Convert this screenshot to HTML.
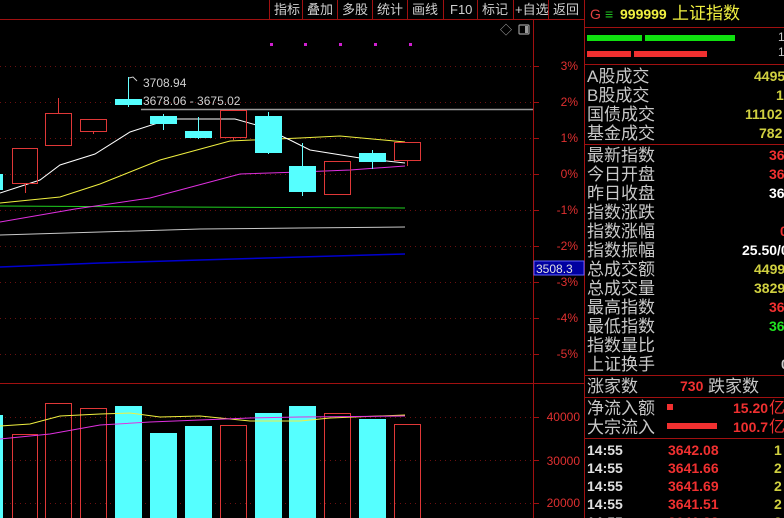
<!DOCTYPE html>
<html><head><meta charset="utf-8"><style>
html,body{margin:0;padding:0;background:#000;width:784px;height:518px;overflow:hidden}
svg{display:block}
text{font-family:"Liberation Sans","Noto Sans CJK SC",sans-serif}
.lb{fill:#c8c8c8;font-size:17px}
.ax{fill:#e03030;font-size:12px}
.tb{fill:#d0d0d0;font-size:13px}
.num{font-family:"Liberation Sans",sans-serif;font-weight:bold;font-size:14px}
</style></head><body>
<svg width="784" height="518" viewBox="0 0 784 518" xmlns="http://www.w3.org/2000/svg">
<rect width="784" height="518" fill="#000"/>
<!-- toolbar -->
<g stroke="#a01010" stroke-width="1">
<line x1="0" y1="19.5" x2="584" y2="19.5"/>
<line x1="269.5" y1="0" x2="269.5" y2="19"/><line x1="302.5" y1="0" x2="302.5" y2="19"/><line x1="337.5" y1="0" x2="337.5" y2="19"/><line x1="372.5" y1="0" x2="372.5" y2="19"/><line x1="407.5" y1="0" x2="407.5" y2="19"/><line x1="443.5" y1="0" x2="443.5" y2="19"/><line x1="477.5" y1="0" x2="477.5" y2="19"/><line x1="513.5" y1="0" x2="513.5" y2="19"/><line x1="548.5" y1="0" x2="548.5" y2="19"/>
<line x1="533.5" y1="19" x2="533.5" y2="518"/>
<line x1="584.5" y1="0" x2="584.5" y2="518"/>
<line x1="0" y1="383.5" x2="584" y2="383.5"/>
</g>
<g class="tb"><text x="274" y="14">指标</text><text x="307" y="14">叠加</text><text x="342" y="14">多股</text><text x="377" y="14">统计</text><text x="412" y="14">画线</text><text x="450" y="14">F10</text><text x="482" y="14">标记</text><text x="515" y="14">+自选</text><text x="553" y="14">返回</text></g>
<text x="500" y="34" fill="#aaa" font-size="12">◇</text>
<rect x="519" y="25" width="10" height="9" fill="none" stroke="#999" stroke-width="1.2" rx="1"/><rect x="525" y="26" width="3" height="7" fill="#999"/>
<!-- grid -->
<g stroke="#6a1010" stroke-dasharray="1 4" stroke-width="1">
<line x1="0" y1="66.5" x2="533" y2="66.5"/><line x1="0" y1="102.5" x2="533" y2="102.5"/><line x1="0" y1="138.5" x2="533" y2="138.5"/><line x1="0" y1="174.5" x2="533" y2="174.5"/><line x1="0" y1="210.5" x2="533" y2="210.5"/><line x1="0" y1="246.5" x2="533" y2="246.5"/><line x1="0" y1="282.5" x2="533" y2="282.5"/><line x1="0" y1="318.5" x2="533" y2="318.5"/><line x1="0" y1="354.5" x2="533" y2="354.5"/>
<line x1="0" y1="417.5" x2="533" y2="417.5"/><line x1="0" y1="460.5" x2="533" y2="460.5"/><line x1="0" y1="503.5" x2="533" y2="503.5"/>
</g>
<g stroke="#a01010"><line x1="533" y1="66.5" x2="539" y2="66.5"/><line x1="533" y1="102.5" x2="539" y2="102.5"/><line x1="533" y1="138.5" x2="539" y2="138.5"/><line x1="533" y1="174.5" x2="539" y2="174.5"/><line x1="533" y1="210.5" x2="539" y2="210.5"/><line x1="533" y1="246.5" x2="539" y2="246.5"/><line x1="533" y1="282.5" x2="539" y2="282.5"/><line x1="533" y1="318.5" x2="539" y2="318.5"/><line x1="533" y1="354.5" x2="539" y2="354.5"/><line x1="533" y1="417.5" x2="539" y2="417.5"/><line x1="533" y1="460.5" x2="539" y2="460.5"/><line x1="533" y1="503.5" x2="539" y2="503.5"/></g>
<g class="ax" text-anchor="end"><text x="578" y="70">3%</text><text x="578" y="106">2%</text><text x="578" y="142">1%</text><text x="578" y="178">0%</text><text x="578" y="214">-1%</text><text x="578" y="250">-2%</text><text x="578" y="286">-3%</text><text x="578" y="322">-4%</text><text x="578" y="358">-5%</text><text x="580" y="421">40000</text><text x="580" y="465">30000</text><text x="580" y="507">20000</text></g>
<rect x="534" y="261" width="50" height="14" fill="#0000a0" stroke="#6060ff" stroke-width="1"/>
<text x="536" y="273" fill="#e0e0e0" font-size="12">3508.3</text>
<!-- dots -->
<g fill="#d020d0"><rect x="270" y="43" width="3" height="3"/><rect x="304" y="43" width="3" height="3"/><rect x="339" y="43" width="3" height="3"/><rect x="374" y="43" width="3" height="3"/><rect x="409" y="43" width="3" height="3"/></g>
<!-- MA lines -->
<line x1="141" y1="109.5" x2="533" y2="109.5" stroke="#999" stroke-width="1.5"/>
<polyline fill="none" stroke="#0000d0" stroke-width="1.5" points="0,267 100,263 200,260 300,257 405,254"/>
<polyline fill="none" stroke="#c8c8c8" points="0,235 100,232 200,229 300,228 405,227"/>
<polyline fill="none" stroke="#20d020" points="0,206 180,207 405,208"/>
<polyline fill="none" stroke="#e030e0" points="0,222 75,209 150,198 240,174 300,172 350,170 405,166"/>
<polyline fill="none" stroke="#f0f040" points="0,203 60,197 100,184 160,160 230,141 300,138 340,136 405,142"/>
<polyline fill="none" stroke="#fff" points="0,193 40,180 60,165 95,154 130,132 170,119 235,119 260,126 290,140 310,150 360,158 405,163"/>
<!-- candles -->
<g stroke="#6ff" stroke-width="1">
<line x1="128.5" y1="77" x2="128.5" y2="107"/><line x1="163.5" y1="114" x2="163.5" y2="130"/><line x1="198.5" y1="117" x2="198.5" y2="139"/><line x1="268.5" y1="112" x2="268.5" y2="154"/><line x1="302.5" y1="143" x2="302.5" y2="196"/><line x1="372.5" y1="150" x2="372.5" y2="169"/>
</g>
<path d="M129 78 l4 -1 l4 4" stroke="#ccc" fill="none"/>
<g fill="#5ff"><rect x="0" y="174" width="3" height="16"/><rect x="115" y="99" width="27" height="6"/><rect x="150" y="116" width="27" height="8"/><rect x="185" y="131" width="27" height="7"/><rect x="255" y="116" width="27" height="37"/><rect x="289" y="166" width="27" height="26"/><rect x="359" y="153" width="27" height="9"/></g>
<g stroke="#e03838" fill="none">
<line x1="25.5" y1="183" x2="25.5" y2="193"/><line x1="58.5" y1="98" x2="58.5" y2="113"/><line x1="93.5" y1="131" x2="93.5" y2="134"/><line x1="233.5" y1="137" x2="233.5" y2="140"/><line x1="407.5" y1="160" x2="407.5" y2="166"/>
<rect x="12.5" y="148.5" width="25" height="35"/><rect x="45.5" y="113.5" width="26" height="32"/><rect x="80.5" y="119.5" width="26" height="12"/><rect x="220.5" y="110.5" width="26" height="27"/><rect x="324.5" y="161.5" width="26" height="33"/><rect x="394.5" y="142.5" width="26" height="18"/>
</g>
<text x="143" y="87" fill="#d0d0d0" font-size="12">3708.94</text>
<text x="143" y="105" fill="#d0d0d0" font-size="12">3678.06 - 3675.02</text>
<!-- volume -->
<g fill="#5ff"><rect x="0" y="415" width="3" height="103"/><rect x="115" y="406" width="27" height="112"/><rect x="150" y="433" width="27" height="85"/><rect x="185" y="426" width="27" height="92"/><rect x="255" y="413" width="27" height="105"/><rect x="289" y="406" width="27" height="112"/><rect x="359" y="419" width="27" height="99"/></g>
<g stroke="#e03838" fill="none"><rect x="12.5" y="434.5" width="25" height="90"/><rect x="45.5" y="403.5" width="26" height="120"/><rect x="80.5" y="408.5" width="26" height="120"/><rect x="220.5" y="425.5" width="26" height="100"/><rect x="324.5" y="413.5" width="26" height="110"/><rect x="394.5" y="424.5" width="26" height="100"/></g>
<polyline fill="none" stroke="#f0f040" points="0,426 30,424 60,416 100,414 130,413 160,417 200,416 250,421 300,421 330,418 405,415"/>
<polyline fill="none" stroke="#e030e0" points="0,439 50,434 100,425 150,422 250,418 300,417 405,416"/>
<!-- right panel -->
<g stroke="#a01010"><line x1="585" y1="27.5" x2="784" y2="27.5"/><line x1="585" y1="64.5" x2="784" y2="64.5"/><line x1="585" y1="144.5" x2="784" y2="144.5"/><line x1="585" y1="375.5" x2="784" y2="375.5"/><line x1="585" y1="397.5" x2="784" y2="397.5"/><line x1="585" y1="438.5" x2="784" y2="438.5"/></g>
<text x="590" y="19" fill="#e04040" font-size="15" class="num" style="font-weight:normal">G</text>
<text x="605" y="19" fill="#20c020" font-size="14">≡</text>
<text x="620" y="19" fill="#f0f040" class="num" font-size="16">999999</text>
<text x="672" y="19" fill="#f0f040" font-size="17">上证指数</text>
<rect x="587" y="35" width="55" height="6" fill="#10e010"/><rect x="645" y="35" width="90" height="6" fill="#10e010"/>
<rect x="587" y="51" width="44" height="6" fill="#f03030"/><rect x="634" y="51" width="73" height="6" fill="#f03030"/>
<text x="778" y="41" fill="#ccc" font-size="12">1</text><text x="778" y="56" fill="#ccc" font-size="12">1</text>
<g class="lb">
<text x="587" y="82">A股成交</text><text x="587" y="101">B股成交</text><text x="587" y="120">国债成交</text><text x="587" y="139">基金成交</text>
<text x="587" y="161">最新指数</text><text x="587" y="180">今日开盘</text><text x="587" y="199">昨日收盘</text><text x="587" y="218">指数涨跌</text><text x="587" y="237">指数涨幅</text><text x="587" y="256">指数振幅</text><text x="587" y="275">总成交额</text><text x="587" y="294">总成交量</text><text x="587" y="313">最高指数</text><text x="587" y="332">最低指数</text><text x="587" y="351">指数量比</text><text x="587" y="370">上证换手</text>
<text x="587" y="392">涨家数</text><text x="708" y="392">跌家数</text>
<text x="587" y="414">净流入额</text><text x="587" y="433">大宗流入</text>
</g>
<g class="num">
<text x="754" y="81" fill="#d0d040">4495</text><text x="776" y="100" fill="#d0d040">1</text><text x="745" y="119" fill="#d0d040">11102</text><text x="759" y="138" fill="#d0d040">782</text>
<text x="769" y="160" fill="#f03030">36</text><text x="769" y="179" fill="#f03030">36</text><text x="769" y="198" fill="#fff">36</text><text x="780" y="236" fill="#f03030">0</text><text x="742" y="255" fill="#fff">25.50/0</text>
<text x="754" y="274" fill="#d0d040">4499</text><text x="754" y="293" fill="#d0d040">3829</text><text x="769" y="312" fill="#f03030">36</text><text x="769" y="331" fill="#20e020">36</text><text x="781" y="369" fill="#ccc">0</text>
<text x="680" y="391" fill="#f03030">730</text>
<text x="733" y="413" fill="#f03030">15.20</text><text x="733" y="432" fill="#f03030">100.7</text>
</g>
<text x="769" y="413" fill="#f03030" font-size="16">亿</text><text x="769" y="432" fill="#f03030" font-size="16">亿</text>
<rect x="667" y="404" width="6" height="6" fill="#f03030"/><rect x="667" y="423" width="50" height="6" fill="#f03030"/>
<g class="num" font-size="14">
<text x="587" y="455" fill="#e0e0e0">14:55</text><text x="668" y="455" fill="#f03030">3642.08</text><text x="774" y="455" fill="#d0d040">1</text>
<text x="587" y="473" fill="#e0e0e0">14:55</text><text x="668" y="473" fill="#f03030">3641.66</text><text x="774" y="473" fill="#d0d040">2</text>
<text x="587" y="491" fill="#e0e0e0">14:55</text><text x="668" y="491" fill="#f03030">3641.69</text><text x="774" y="491" fill="#d0d040">2</text>
<text x="587" y="509" fill="#e0e0e0">14:55</text><text x="668" y="509" fill="#f03030">3641.51</text><text x="774" y="509" fill="#d0d040">2</text>
<text x="587" y="527" fill="#e0e0e0">14:55</text><text x="668" y="527" fill="#f03030">3641.38</text><text x="774" y="527" fill="#d0d040">2</text>
</g>
</svg>
</body></html>
